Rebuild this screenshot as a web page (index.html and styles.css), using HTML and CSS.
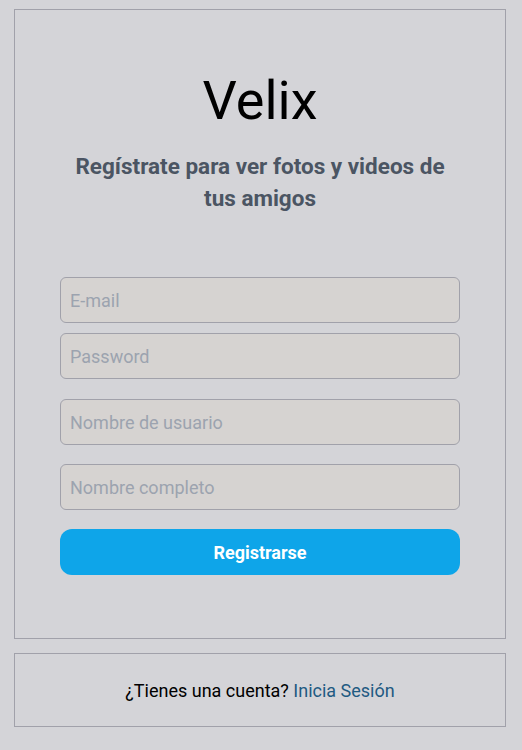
FILE: index.html
```html
<!DOCTYPE html>
<html lang="es">
<head>
<meta charset="utf-8">
<title>Velix - Registro</title>
<link rel="stylesheet" href="styles.css">
</head>
<body>
<main class="page">
  <section class="card">
    <h1 class="logo">Velix</h1>
    <p class="tagline">Regístrate para ver fotos y videos de tus amigos</p>
    <form class="form">
      <div class="pair">
        <input class="field" type="email" placeholder="E-mail">
        <input class="field" type="password" placeholder="Password">
      </div>
      <input class="field" type="text" placeholder="Nombre de usuario">
      <input class="field" type="text" placeholder="Nombre completo">
      <button class="submit" type="button">Registrarse</button>
    </form>
  </section>
  <section class="card footer">
    <p class="login">¿Tienes una cuenta? <a href="#" class="link">Inicia Sesión</a></p>
  </section>
</main>
</body>
</html>
```
FILE: styles.css
```css
* { box-sizing: border-box; }
html, body { margin: 0; padding: 0; }
body {
  background: #d4d4d8;
  font-family: Roboto, "Noto Sans", Arial, sans-serif;
  color: #000;
}
.page {
  padding: 9px 16px 0 14px;
  display: flex;
  flex-direction: column;
  gap: 14px;
}
.card {
  border: 1px solid #a1a1aa;
  display: flex;
  flex-direction: column;
  align-items: center;
}
.card:first-child {
  padding: 64px 45px 63px;
  height: 630px;
}
.logo {
  margin: 0;
  font-size: 54px;
  font-weight: 400;
  line-height: 54px;
}
.tagline {
  margin: 22px 0 0;
  font-size: 22.5px;
  font-weight: 700;
  line-height: 32px;
  color: #4b5563;
  text-align: center;
}
.form {
  margin-top: 63px;
  width: 100%;
  display: flex;
  flex-direction: column;
  gap: 19px;
}
.pair {
  display: flex;
  flex-direction: column;
  gap: 10px;
  margin-bottom: 1px;
}
.field {
  width: 100%;
  height: 46px;
  background: #d6d3d1;
  border: 1px solid #a1a1aa;
  border-radius: 6px;
  padding: 0 9px;
  font-family: inherit;
  font-size: 18px;
  color: #374151;
  outline: none;
}
.field::placeholder { color: #9ca3af; }
.submit {
  height: 46px;
  width: 100%;
  border: none;
  border-radius: 12px;
  background: #0ea5e9;
  color: #fff;
  font-family: inherit;
  font-size: 18px;
  font-weight: 700;
}
.footer {
  height: 74px;
  justify-content: center;
}
.login {
  margin: 0;
  font-size: 18px;
}
.link {
  color: #1f5a82;
  text-decoration: none;
}
```
